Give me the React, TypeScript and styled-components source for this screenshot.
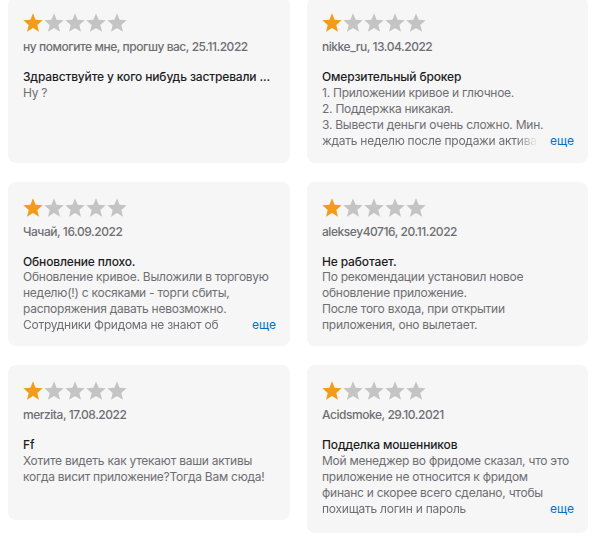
import styled, { createGlobalStyle } from "styled-components";

const GlobalStyle = createGlobalStyle`
  html, body {
    margin: 0;
    padding: 0;
    background: #ffffff;
  }
  body {
    font-family: Inter, "Noto Sans", sans-serif;
    -webkit-font-smoothing: antialiased;
  }
`;

type Review = {
  author: string;
  title: string;
  lines: string[];
  more?: boolean;
  height: number;
};

const reviews: Review[] = [
  {
    author: "ну помогите мне, прогшу вас, 25.11.2022",
    title: "Здравствуйте у кого нибудь застревали ...",
    lines: ["Ну ?"],
    height: 166,
  },
  {
    author: "nikke_ru, 13.04.2022",
    title: "Омерзительный брокер",
    lines: [
      "1. Приложении кривое и глючное.",
      "2. Поддержка никакая.",
      "3. Вывести деньги очень сложно. Мин.",
      "ждать неделю после продажи актива.",
    ],
    more: true,
    height: 166,
  },
  {
    author: "Чачай, 16.09.2022",
    title: "Обновление плохо.",
    lines: [
      "Обновление кривое. Выложили в торговую",
      "неделю(!) с косяками - торги сбиты,",
      "распоряжения давать невозможно.",
      "Сотрудники Фридома не знают об",
    ],
    more: true,
    height: 164,
  },
  {
    author: "aleksey40716, 20.11.2022",
    title: "Не работает.",
    lines: [
      "По рекомендации установил новое",
      "обновление приложение.",
      "После того входа, при открытии",
      "приложения, оно вылетает.",
    ],
    height: 164,
  },
  {
    author: "merzita, 17.08.2022",
    title: "Ff",
    lines: [
      "Хотите видеть как утекают ваши активы",
      "когда висит приложение?Тогда Вам сюда!",
    ],
    height: 155,
  },
  {
    author: "Acidsmoke, 29.10.2021",
    title: "Подделка мошенников",
    lines: [
      "Мой менеджер во фридоме сказал, что это",
      "приложение не относится к фридом",
      "финанс и скорее всего сделано, чтобы",
      "похищать логин и пароль",
    ],
    more: true,
    height: 168,
  },
];

const Page = styled.div`
  padding: 0 6px 0 8px;
  overflow: hidden;
`;

const Grid = styled.div`
  display: grid;
  grid-template-columns: 282px 281px;
  column-gap: 17px;
  row-gap: 19px;
  align-items: start;
  margin-top: -3px;
`;

const Card = styled.article<{ $height: number }>`
  box-sizing: border-box;
  height: ${(p) => p.$height}px;
  padding: 16px 14px 13px 15px;
  background: #f6f6f6;
  border-radius: 8px;
  display: flex;
  flex-direction: column;
`;

const Stars = styled.div`
  display: flex;
  gap: 1px;
  height: 19px;
`;

const Author = styled.div`
  margin-top: 7px;
  font-size: 12px;
  line-height: 16px;
  font-weight: 500;
  letter-spacing: -0.45px;
  color: #6e6e73;
  white-space: nowrap;
`;

const Title = styled.div`
  margin-top: 14px;
  font-size: 12px;
  line-height: 16px;
  font-weight: 500;
  letter-spacing: -0.15px;
  color: #1d1d1f;
  white-space: nowrap;
  overflow: hidden;
`;

const Body = styled.div`
  display: flex;
  flex-direction: column;
  font-size: 12px;
  line-height: 16px;
  letter-spacing: -0.25px;
  color: #6e6e73;
`;

const Line = styled.div`
  white-space: nowrap;
  overflow: hidden;
`;

const LastRow = styled.div`
  display: flex;
  align-items: baseline;
  gap: 12px;
`;

const FadedLine = styled.div`
  flex: 1;
  min-width: 0;
  white-space: nowrap;
  overflow: hidden;
  -webkit-mask-image: linear-gradient(to left, transparent 0, #000 22px);
  mask-image: linear-gradient(to left, transparent 0, #000 22px);
`;

const More = styled.a`
  flex: none;
  font-size: 12px;
  color: #0070c9;
  letter-spacing: 0;
  cursor: pointer;
`;

const Star = ({ filled }: { filled: boolean }) => (
  <svg width="20" height="19" viewBox="0 0 20 19">
    <path
      d="M10 0.3l2.6 6.5 7.1.5-5.4 4.6 1.7 6.9L10 15.1l-6 3.7 1.7-6.9L.3 7.3l7.1-.5z"
      fill={filled ? "#f39c1a" : "#c4c4c4"}
    />
  </svg>
);

const ReviewCard = ({ review }: { review: Review }) => {
  const head = review.more ? review.lines.slice(0, -1) : review.lines;
  const last = review.lines[review.lines.length - 1];
  return (
    <Card $height={review.height}>
      <Stars>
        {[0, 1, 2, 3, 4].map((i) => (
          <Star key={i} filled={i === 0} />
        ))}
      </Stars>
      <Author>{review.author}</Author>
      <Title>{review.title}</Title>
      <Body>
        {head.map((l) => (
          <Line key={l}>{l}</Line>
        ))}
        {review.more && (
          <LastRow>
            <FadedLine>{last}</FadedLine>
            <More>еще</More>
          </LastRow>
        )}
      </Body>
    </Card>
  );
};

const App = () => (
  <Page>
    <GlobalStyle />
    <Grid>
      {reviews.map((r) => (
        <ReviewCard key={r.author} review={r} />
      ))}
    </Grid>
  </Page>
);

export default App;
